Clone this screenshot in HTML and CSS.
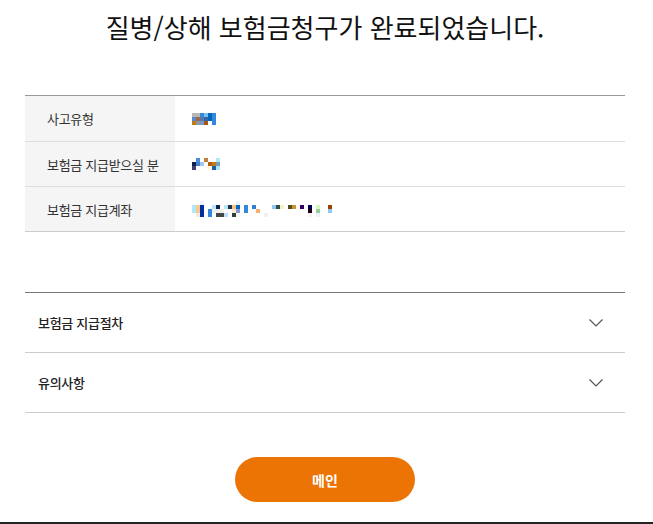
FILE: index.html
```html
<!DOCTYPE html>
<html lang="ko">
<head>
<meta charset="utf-8">
<title>보험금청구 완료</title>
<link rel="stylesheet" href="styles.css">
</head>
<body>
<main class="page">
  <h1 class="title">질병/상해 보험금청구가 완료되었습니다.</h1>

  <div class="info">
    <div class="row">
      <div class="label">사고유형</div>
      <div class="value">
        <svg class="mosaic" width="24" height="12" viewBox="0 0 24 12" shape-rendering="crispEdges">
          <rect x="0" y="0" width="8" height="4" fill="#b8b8b8"/>
          <rect x="8" y="0" width="4" height="4" fill="#3388dd"/>
          <rect x="12" y="0" width="4" height="4" fill="#77c0f0"/>
          <rect x="16" y="0" width="4" height="8" fill="#0066bb"/>
          <rect x="20" y="0" width="4" height="12" fill="#3388dd"/>
          <rect x="0" y="4" width="4" height="4" fill="#5588cc"/>
          <rect x="4" y="4" width="4" height="4" fill="#a06840"/>
          <rect x="8" y="4" width="4" height="4" fill="#5577aa"/>
          <rect x="12" y="4" width="4" height="4" fill="#3366aa"/>
          <rect x="0" y="8" width="4" height="4" fill="#c07810"/>
          <rect x="4" y="8" width="4" height="4" fill="#8899aa"/>
          <rect x="8" y="8" width="4" height="4" fill="#7799cc"/>
          <rect x="12" y="8" width="4" height="4" fill="#aa5511"/>
        </svg>
      </div>
    </div>
    <div class="row">
      <div class="label">보험금 지급받으실 분</div>
      <div class="value">
        <svg class="mosaic" width="28" height="12" viewBox="0 0 28 12" shape-rendering="crispEdges">
          <rect x="4" y="0" width="4" height="4" fill="#4a90d8"/>
          <rect x="12" y="0" width="4" height="4" fill="#c08040"/>
          <rect x="24" y="0" width="4" height="4" fill="#b0e8f8"/>
          <rect x="0" y="4" width="4" height="4" fill="#102050"/>
          <rect x="4" y="4" width="4" height="4" fill="#4a80c8"/>
          <rect x="8" y="4" width="4" height="4" fill="#a0c8f0"/>
          <rect x="16" y="4" width="4" height="4" fill="#b06010"/>
          <rect x="20" y="4" width="4" height="4" fill="#c08010"/>
          <rect x="24" y="4" width="4" height="4" fill="#70a0c0"/>
          <rect x="0" y="8" width="4" height="4" fill="#404070"/>
          <rect x="16" y="8" width="4" height="4" fill="#fff8d8"/>
          <rect x="20" y="8" width="4" height="4" fill="#2060b0"/>
          <rect x="24" y="8" width="4" height="4" fill="#b0e8f8"/>
        </svg>
      </div>
    </div>
    <div class="row">
      <div class="label">보험금 지급계좌</div>
      <div class="value">
        <svg class="mosaic" width="140" height="16" viewBox="0 0 140 16" shape-rendering="crispEdges">
          <rect x="8" y="0" width="4" height="4" fill="#f0f0f8"/>
          <rect x="44" y="0" width="4" height="4" fill="#f0f0f8"/>
          <rect x="0" y="4" width="4" height="8" fill="#b0e8f8"/>
          <rect x="4" y="4" width="4" height="8" fill="#f8c890"/>
          <rect x="4" y="12" width="4" height="4" fill="#f8e8d8"/>
          <rect x="8" y="4" width="4" height="12" fill="#0030a0"/>
          <rect x="20" y="4" width="4" height="4" fill="#b8e8f8"/>
          <rect x="24" y="4" width="4" height="4" fill="#102050"/>
          <rect x="32" y="4" width="4" height="4" fill="#b8e8f8"/>
          <rect x="36" y="4" width="4" height="4" fill="#203050"/>
          <rect x="40" y="4" width="4" height="4" fill="#f8c080"/>
          <rect x="44" y="4" width="4" height="4" fill="#0068c0"/>
          <rect x="52" y="4" width="4" height="8" fill="#3388dd"/>
          <rect x="60" y="4" width="4" height="4" fill="#3380d0"/>
          <rect x="80" y="4" width="4" height="4" fill="#90c8f0"/>
          <rect x="84" y="4" width="4" height="4" fill="#305050"/>
          <rect x="88" y="4" width="4" height="4" fill="#f8f0c0"/>
          <rect x="96" y="4" width="4" height="4" fill="#505020"/>
          <rect x="100" y="4" width="4" height="4" fill="#d09030"/>
          <rect x="108" y="4" width="4" height="4" fill="#300060"/>
          <rect x="116" y="4" width="4" height="4" fill="#000060"/>
          <rect x="124" y="4" width="4" height="4" fill="#d0f8c0"/>
          <rect x="136" y="4" width="4" height="4" fill="#a04000"/>
          <rect x="16" y="8" width="4" height="8" fill="#3388dd"/>
          <rect x="20" y="8" width="12" height="4" fill="#f0f0f0"/>
          <rect x="40" y="8" width="4" height="4" fill="#f8e8d8"/>
          <rect x="44" y="8" width="4" height="4" fill="#8899cc"/>
          <rect x="64" y="8" width="4" height="4" fill="#f0b070"/>
          <rect x="116" y="8" width="4" height="4" fill="#200010"/>
          <rect x="124" y="8" width="4" height="4" fill="#a0c8a0"/>
          <rect x="136" y="8" width="4" height="4" fill="#90c8f0"/>
          <rect x="24" y="12" width="8" height="4" fill="#404848"/>
          <rect x="32" y="12" width="4" height="4" fill="#b8e0f8"/>
          <rect x="40" y="12" width="4" height="4" fill="#304038"/>
          <rect x="44" y="12" width="4" height="4" fill="#f0f8f8"/>
          <rect x="72" y="12" width="4" height="4" fill="#f0f0f0"/>
          <rect x="116" y="12" width="4" height="4" fill="#f8f0f8"/>
          <rect x="124" y="12" width="4" height="4" fill="#f0f0f8"/>
        </svg>
      </div>
    </div>
  </div>

  <div class="accordion">
    <div class="acc-item">
      <span class="acc-title">보험금 지급절차</span>
      <svg class="chev" width="16" height="10" viewBox="0 0 16 10"><path d="M1.5 1.5 L8 8 L14.5 1.5" fill="none" stroke="#555" stroke-width="1.2"/></svg>
    </div>
    <div class="acc-item">
      <span class="acc-title">유의사항</span>
      <svg class="chev" width="16" height="10" viewBox="0 0 16 10"><path d="M1.5 1.5 L8 8 L14.5 1.5" fill="none" stroke="#555" stroke-width="1.2"/></svg>
    </div>
  </div>

  <div class="actions">
    <button class="btn-main" type="button">메인</button>
  </div>
</main>
<footer class="footer"></footer>
</body>
</html>
```

FILE: styles.css
```css
html, body {
  margin: 0;
  padding: 0;
  background: #fff;
}
body {
  font-family: "Noto Sans CJK KR", "Noto Sans", sans-serif;
  color: #222;
}
.page {
  width: 600px;
  margin-left: 25px;
}
.title {
  margin: 0;
  height: 56px;
  line-height: 54px;
  font-size: 26px;
  font-weight: 400;
  letter-spacing: 0;
  color: #111;
  text-align: center;
}
.info {
  margin-top: 39px;
  border-top: 1px solid #999;
  border-bottom: 1px solid #ccc;
}
.row {
  display: flex;
  height: 45px;
}
.row + .row {
  border-top: 1px solid #ddd;
  height: 44px;
}
.label {
  width: 128px;
  padding-left: 22px;
  background: #f5f5f5;
  font-size: 13px;
  color: #333;
  display: flex;
  align-items: center;
  letter-spacing: -0.3px;
}
.value {
  flex: 1;
  display: flex;
  align-items: center;
  padding-left: 17px;
}
.mosaic {
  display: block;
}
.accordion {
  margin-top: 60px;
  border-top: 1px solid #777;
}
.acc-item {
  display: flex;
  align-items: center;
  justify-content: space-between;
  height: 59px;
  padding: 0 21px 0 13px;
  border-bottom: 1px solid #ccc;
}
.acc-title {
  font-size: 13px;
  font-weight: 500;
  color: #222;
  letter-spacing: -0.3px;
}
.chev {
  display: block;
}
.actions {
  display: flex;
  justify-content: center;
  padding-top: 44px;
}
.btn-main {
  width: 180px;
  height: 45px;
  border: 0;
  border-radius: 23px;
  background: #ec7405;
  color: #fff;
  font-family: inherit;
  font-size: 14px;
  font-weight: 700;
}
.footer {
  margin-top: 20px;
  height: 2px;
  background: #222;
}
```
